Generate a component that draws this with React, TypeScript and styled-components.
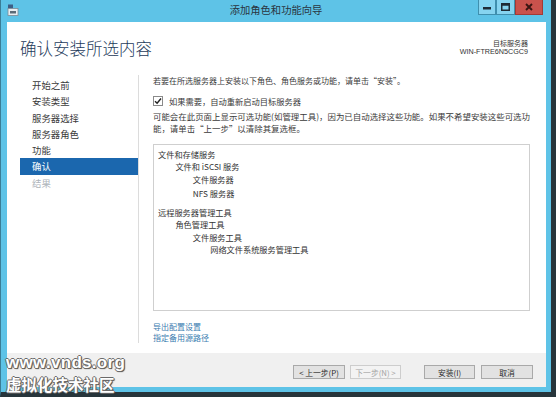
import React from "react";
import styled, { createGlobalStyle } from "styled-components";

const GlobalStyle = createGlobalStyle`
  html, body { margin: 0; padding: 0; background: #ffffff; }
  body { font-family: "Noto Sans", "Noto Sans CJK SC", sans-serif; }
  * { box-sizing: border-box; }
`;

const Page = styled.div`
  position: relative;
  width: 558px;
  height: 397px;
  overflow: hidden;
`;

const Window = styled.div`
  display: flex;
  flex-direction: column;
  width: 556px;
  height: 397px;
  background: #5ec3e7;
  border-left: 1px solid #3b7d96;
  border-right: 5px solid #27353b;
  border-bottom: 5px solid #27353b;
`;

const TitleBar = styled.div`
  display: grid;
  grid-template-columns: 1fr auto 1fr;
  height: 22px;
  flex: none;
`;

const AppIcon = styled.svg`
  margin: 4px 0 0 6px;
  width: 12px;
  height: 12px;
`;

const Title = styled.div`
  font-family: "Noto Sans CJK SC", sans-serif;
  font-size: 10.3px;
  line-height: 20px;
  color: #2a3540;
`;

const Controls = styled.div`
  display: flex;
  justify-self: end;
  align-items: flex-start;
  margin-right: 8px;
`;

const CtrlButton = styled.div<{ $w: number; $close?: boolean }>`
  width: ${(p) => p.$w}px;
  height: 15px;
  display: flex;
  align-items: center;
  justify-content: center;
  background: ${(p) => (p.$close ? "#c9524c" : "#86d4f0")};
  border: 1px solid ${(p) => (p.$close ? "#a33a36" : "#3f8fae")};
  border-top: none;
`;

const Client = styled.div`
  flex: 1;
  display: flex;
  flex-direction: column;
  margin: 0 5px 5px 6px;
  background: #ffffff;
`;

const Header = styled.div`
  display: flex;
  justify-content: space-between;
  height: 46px;
  padding: 0 18px 0 13px;
  flex: none;
`;

const Heading = styled.h1`
  margin: 16px 0 0 0;
  font-family: "Noto Sans CJK SC", sans-serif;
  font-weight: 300;
  font-size: 16.5px;
  line-height: 20px;
  color: #1e3b5b;
`;

const ServerInfo = styled.div`
  margin-top: 17px;
  text-align: right;
  font-family: "Noto Sans CJK SC", sans-serif;
  font-size: 7px;
  line-height: 8.5px;
  color: #333;
`;

const ServerName = styled.div`
  font-family: "Liberation Sans", Arial, sans-serif;
  font-size: 7.2px;
`;

const Body = styled.div`
  flex: 1;
  display: flex;
  padding: 7px 0 10px 0;
`;

const Nav = styled.div`
  width: 132px;
  flex: none;
  border-right: 1px solid #dcdcdc;
  padding-top: 2px;
`;

const NavItem = styled.div<{ $active?: boolean; $disabled?: boolean }>`
  margin-left: 13px;
  padding-left: 12px;
  height: 16.3px;
  line-height: 16.3px;
  font-family: "Noto Sans CJK SC", sans-serif;
  font-size: 9.4px;
  color: ${(p) => (p.$active ? "#ffffff" : p.$disabled ? "#aeb4ba" : "#3a3a3a")};
  background: ${(p) => (p.$active ? "#1b67ae" : "transparent")};
`;

const Main = styled.div`
  flex: 1;
  display: flex;
  flex-direction: column;
  padding: 0 16px 0 14px;
  font-family: "Noto Sans CJK SC", sans-serif;
  color: #3a3a3a;
`;

const Intro = styled.div`
  font-size: 8px;
  line-height: 11px;
  white-space: nowrap;
`;

const CheckRow = styled.div`
  display: flex;
  align-items: center;
  gap: 6px;
  margin-top: 9px;
  height: 12px;
  font-size: 8.25px;
`;

const CheckBox = styled.div`
  width: 10px;
  height: 10px;
  border: 1px solid #8a8a8a;
  background: #fff;
  display: flex;
  align-items: center;
  justify-content: center;
`;

const Para = styled.div`
  margin-top: 3px;
  font-size: 8.45px;
  line-height: 12px;
  white-space: nowrap;
`;

const ListBox = styled.div`
  margin-top: 10px;
  height: 167px;
  border: 1px solid #cfcfcf;
  padding: 2.5px 4px;
`;

const ListRow = styled.div<{ $level: number; $gap?: number }>`
  padding-left: ${(p) => p.$level * 17.4}px;
  margin-top: ${(p) => p.$gap || 0}px;
  font-size: 8.2px;
  line-height: 12.5px;
  color: #333;
  white-space: nowrap;
`;

const Links = styled.div`
  margin-top: 9.5px;
  display: flex;
  flex-direction: column;
`;

const LinkText = styled.a`
  font-size: 8px;
  line-height: 11px;
  color: #3a7cb0;
  text-decoration: none;
`;

const Footer = styled.div`
  height: 34px;
  flex: none;
  display: flex;
  justify-content: flex-end;
  align-items: flex-start;
  padding: 12px 13px 0 0;
  background: #f0f0f0;
`;

const WizButton = styled.div<{ $w: number; $gap: number; $disabled?: boolean }>`
  width: ${(p) => p.$w}px;
  height: 14px;
  margin-left: ${(p) => p.$gap}px;
  display: flex;
  align-items: center;
  justify-content: center;
  font-family: "Noto Sans CJK SC", sans-serif;
  font-size: 7.8px;
  color: ${(p) => (p.$disabled ? "#a3a3a3" : "#2a2a2a")};
  background: ${(p) => (p.$disabled ? "#f3f3f3" : "#e2e2e2")};
  border: 1px solid ${(p) => (p.$disabled ? "#cdcdcd" : "#a9a9a9")};
  white-space: nowrap;
`;

const Watermark = styled.div`
  position: absolute;
  left: 6px;
  top: 351px;
  display: flex;
  flex-direction: column;
  color: #ffffff;
  font-weight: bold;
  text-shadow: 1px 0 0 #6a6a6a, -1px 0 0 #6a6a6a, 0 1px 0 #6a6a6a, 0 -1px 0 #6a6a6a, 1px 1px 1px #333;
  pointer-events: none;
`;

const MarkUrl = styled.div`
  font-family: "Liberation Sans", Arial, sans-serif;
  font-size: 17px;
  line-height: 23px;
  letter-spacing: 0.3px;
`;

const MarkName = styled.div`
  font-family: "Noto Sans CJK SC", sans-serif;
  font-size: 15.5px;
  line-height: 20px;
`;

const navItems = ["开始之前", "安装类型", "服务器选择", "服务器角色", "功能", "确认", "结果"];

const listRows: { text: string; level: number; gap?: number }[] = [
  { text: "文件和存储服务", level: 0 },
  { text: "文件和 iSCSI 服务", level: 1 },
  { text: "文件服务器", level: 2 },
  { text: "NFS 服务器", level: 2, gap: 2 },
  { text: "远程服务器管理工具", level: 0, gap: 6 },
  { text: "角色管理工具", level: 1 },
  { text: "文件服务工具", level: 2 },
  { text: "网络文件系统服务管理工具", level: 3 },
];

export default function App() {
  return (
    <Page>
      <GlobalStyle />
      <Window>
        <TitleBar>
          <AppIcon viewBox="0 0 12 12">
            <rect x="1" y="0.5" width="5" height="4" fill="#3d5f86" />
            <rect x="1" y="4.5" width="10" height="7" fill="#e9eef2" stroke="#7d8b96" strokeWidth="0.8" />
            <rect x="3" y="7" width="6" height="2.5" fill="#5b6b78" />
          </AppIcon>
          <Title>添加角色和功能向导</Title>
          <Controls>
            <CtrlButton $w={18}>
              <svg width="8" height="6" viewBox="0 0 8 6">
                <rect x="0" y="3" width="8" height="2.5" fill="#1f2b36" />
              </svg>
            </CtrlButton>
            <CtrlButton $w={19}>
              <svg width="9" height="8" viewBox="0 0 9 8">
                <rect x="0.75" y="0.75" width="7.5" height="6.5" fill="none" stroke="#1f2b36" strokeWidth="1.5" />
                <rect x="0.75" y="0.75" width="7.5" height="2" fill="#1f2b36" />
              </svg>
            </CtrlButton>
            <CtrlButton $w={28} $close>
              <svg width="8" height="8" viewBox="0 0 8 8">
                <path d="M1 1 L7 7 M7 1 L1 7" stroke="#3a1512" strokeWidth="1.9" />
              </svg>
            </CtrlButton>
          </Controls>
        </TitleBar>
        <Client>
          <Header>
            <Heading>确认安装所选内容</Heading>
            <ServerInfo>
              <div>目标服务器</div>
              <ServerName>WIN-FTRE6N5CGC9</ServerName>
            </ServerInfo>
          </Header>
          <Body>
            <Nav>
              {navItems.map((n, i) => (
                <NavItem key={n} $active={i === 5} $disabled={i === 6}>
                  {n}
                </NavItem>
              ))}
            </Nav>
            <Main>
              <Intro>若要在所选服务器上安装以下角色、角色服务或功能，请单击“安装”。</Intro>
              <CheckRow>
                <CheckBox>
                  <svg width="8" height="8" viewBox="0 0 8 8">
                    <path d="M1 4.2 L3.1 6.3 L7 1.5" fill="none" stroke="#222" strokeWidth="1.4" />
                  </svg>
                </CheckBox>
                <span>如果需要，自动重新启动目标服务器</span>
              </CheckRow>
              <Para>
                可能会在此页面上显示可选功能(如管理工具)，因为已自动选择这些功能。如果不希望安装这些可选功
                <br />
                能，请单击“上一步”以清除其复选框。
              </Para>
              <ListBox>
                {listRows.map((r) => (
                  <ListRow key={r.text} $level={r.level} $gap={r.gap}>
                    {r.text}
                  </ListRow>
                ))}
              </ListBox>
              <Links>
                <LinkText href="#">导出配置设置</LinkText>
                <LinkText href="#">指定备用源路径</LinkText>
              </Links>
            </Main>
          </Body>
          <Footer>
            <WizButton $w={52} $gap={0}>&lt; 上一步(P)</WizButton>
            <WizButton $w={51} $gap={5} $disabled>下一步(N) &gt;</WizButton>
            <WizButton $w={51} $gap={23}>安装(I)</WizButton>
            <WizButton $w={52} $gap={6}>取消</WizButton>
          </Footer>
        </Client>
      </Window>
      <Watermark>
        <MarkUrl>www.vnds.org</MarkUrl>
        <MarkName>虚拟化技术社区</MarkName>
      </Watermark>
    </Page>
  );
}
